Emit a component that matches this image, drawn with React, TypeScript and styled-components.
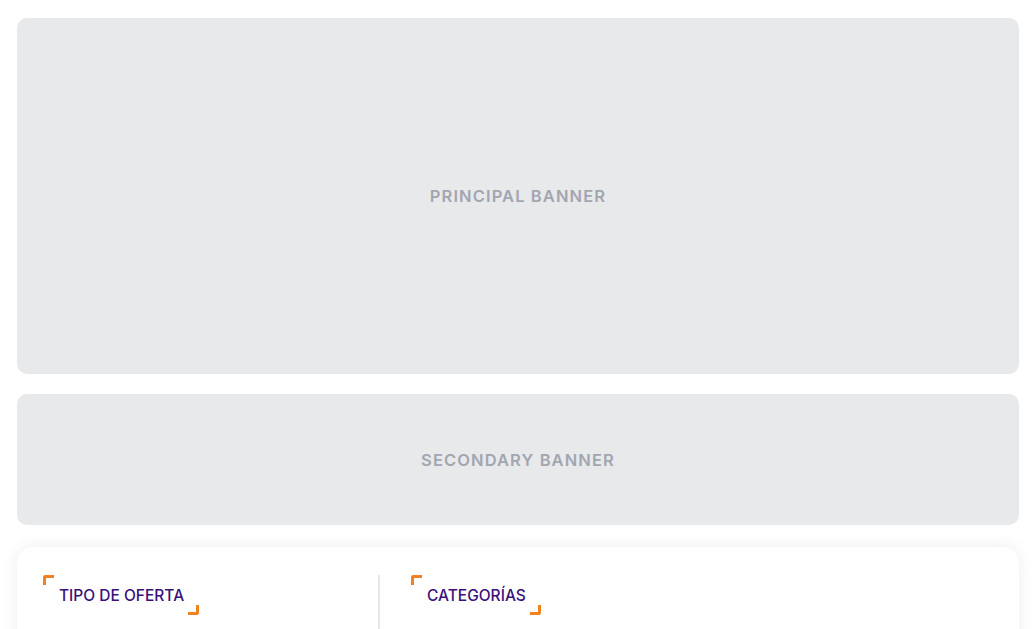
import React from "react";
import styled, { createGlobalStyle } from "styled-components";

const Global = createGlobalStyle`
  html, body { margin: 0; padding: 0; background: #ffffff; }
  body { font-family: "Inter", "Noto Sans", "Liberation Sans", sans-serif; }
  * { box-sizing: border-box; }
`;

const Page = styled.div`
  display: flex;
  flex-direction: column;
  padding: 18px 16px 0 17px;
  width: 1035px;
  height: 629px;
  overflow: hidden;
`;

const Banner = styled.div<{ $h: number; $mb: number }>`
  height: ${(p) => p.$h}px;
  margin-bottom: ${(p) => p.$mb}px;
  background: #e8e9eb;
  border-radius: 10px;
  display: flex;
  align-items: center;
  justify-content: center;
  flex-shrink: 0;
`;

const BannerLabel = styled.span`
  font-size: 16.5px;
  font-weight: 600;
  letter-spacing: 1.1px;
  color: #a2a6b0;
  text-transform: uppercase;
`;

const Card = styled.div`
  background: #ffffff;
  border-radius: 16px;
  box-shadow: 0 0 18px rgba(0, 0, 0, 0.07);
  display: grid;
  grid-template-columns: 335px 1fr;
  padding: 28px 26px 40px 26px;
  flex-shrink: 0;
  height: 200px;
`;

const Column = styled.div<{ $divided?: boolean }>`
  ${(p) =>
    p.$divided
      ? `border-left: 2px solid #e6e7ea; padding-left: 31px;`
      : ``}
`;

const Title = styled.div`
  position: relative;
  display: inline-block;
  padding: 13px 15px 11px 16px;
  font-size: 15.5px;
  font-weight: 500;
  letter-spacing: 0px;
  color: #3a0f7a;
  line-height: 16px;
  &::before,
  &::after {
    content: "";
    position: absolute;
    width: 8px;
    height: 7px;
    border-color: #f0831f;
    border-style: solid;
  }
  &::before {
    top: 0;
    left: 0;
    border-width: 3px 0 0 3px;
    border-top-left-radius: 3px;
  }
  &::after {
    bottom: 0;
    right: 0;
    border-width: 0 3px 3px 0;
    border-bottom-right-radius: 3px;
  }
`;

export default function App() {
  return (
    <>
      <Global />
      <Page>
        <Banner $h={356} $mb={20}>
          <BannerLabel>Principal Banner</BannerLabel>
        </Banner>
        <Banner $h={131} $mb={22}>
          <BannerLabel>Secondary Banner</BannerLabel>
        </Banner>
        <Card>
          <Column>
            <Title>TIPO DE OFERTA</Title>
          </Column>
          <Column $divided>
            <Title>CATEGORÍAS</Title>
          </Column>
        </Card>
      </Page>
    </>
  );
}
